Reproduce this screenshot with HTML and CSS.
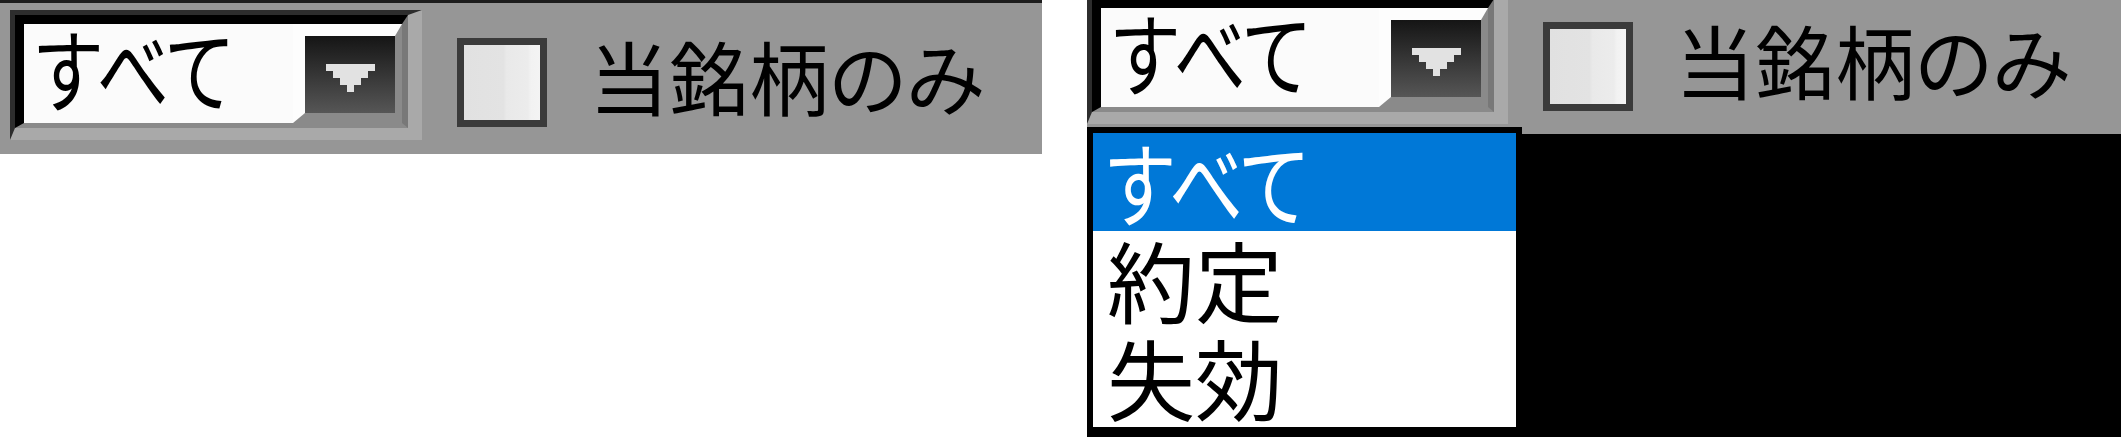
FILE: index.html
```html
<!DOCTYPE html>
<html lang="ja">
<head>
<meta charset="utf-8">
<title>Filter</title>
<link rel="stylesheet" href="styles.css">
</head>
<body>
<div class="screen">
  <section class="pane pane--left">
    <div class="toolbar toolbar--left">
      <div class="row">
        <div class="combo">
          <div class="combo__inner">
            <div class="combo__field"><span class="combo__text">すべて</span></div>
            <div class="combo__btn">
              <div class="combo__face">
                <svg class="combo__arrow" viewBox="0 0 7 4" shape-rendering="crispEdges"><polygon points="0,0 7,0 7,1 6,1 6,2 5,2 5,3 4,3 4,4 3,4 3,3 2,3 2,2 1,2 1,1 0,1"/></svg>
              </div>
            </div>
          </div>
        </div>
        <div class="check">
          <span class="check__box"></span>
          <span class="check__label">当銘柄のみ</span>
        </div>
      </div>
    </div>
  </section>
  <section class="pane pane--right">
    <div class="toolbar toolbar--right">
      <div class="row">
        <div class="combo combo--open">
          <div class="combo__inner">
            <div class="combo__field"><span class="combo__text">すべて</span></div>
            <div class="combo__btn">
              <div class="combo__face">
                <svg class="combo__arrow" viewBox="0 0 7 4" shape-rendering="crispEdges"><polygon points="0,0 7,0 7,1 6,1 6,2 5,2 5,3 4,3 4,4 3,4 3,3 2,3 2,2 1,2 1,1 0,1"/></svg>
              </div>
            </div>
          </div>
          <ul class="dropdown">
            <li class="dropdown__item dropdown__item--selected"><span class="dropdown__text dropdown__text--kana">すべて</span></li>
            <li class="dropdown__item"><span class="dropdown__text">約定</span></li>
            <li class="dropdown__item"><span class="dropdown__text">失効</span></li>
          </ul>
        </div>
        <div class="check">
          <span class="check__box"></span>
          <span class="check__label">当銘柄のみ</span>
        </div>
      </div>
    </div>
  </section>
</div>
</body>
</html>
```

FILE: styles.css
```css
* {
  box-sizing: border-box;
}

html,
body {
  margin: 0;
  padding: 0;
}

body {
  background: #ffffff;
  overflow: hidden;
  font-family: "Noto Sans CJK JP", "Noto Sans CJK SC", sans-serif;
  color: #000000;
}

.screen {
  display: flex;
  gap: 45px;
  height: 437px;
}

.pane--left {
  width: 1042px;
  flex: none;
}

.pane--right {
  flex: 1;
  height: 437px;
  background: #000000;
}

.toolbar {
  background: #969696;
}

.toolbar--left {
  height: 154px;
  border-top: 3px solid #1c1c1c;
}

.toolbar--right {
  height: 140px;
}

.row {
  display: flex;
  align-items: flex-start;
}

.toolbar--left .row {
  margin: 7px 0 0 10px;
}

.toolbar--right .row {
  margin-top: -6px;
}

/* ---- combo box ---- */
.combo {
  position: relative;
  flex: none;
  width: 412px;
  height: 130px;
  border-style: solid;
  border-width: 5px 14px 12px 5px;
  border-color: #2d2d2d #a9a9a9 #a9a9a9 #2d2d2d;
}

.combo--open {
  width: 421px;
}

.combo__inner {
  height: 100%;
  display: flex;
  border-style: solid;
  border-width: 9px 6px 5px 9px;
  border-color: #000000 #787878 #8a8a8a #000000;
}

.combo__field {
  flex: 1;
  min-width: 0;
  background: #fbfbfb;
  display: flex;
  align-items: center;
  padding: 0 0 15px 12px;
}

.combo__text {
  display: inline-block;
  font-size: 90px;
  line-height: 1;
  white-space: nowrap;
  font-feature-settings: "palt";
  transform: scaleX(0.8);
  transform-origin: left center;
}

.combo__btn {
  flex: none;
  width: 109px;
  border-style: solid;
  border-width: 12px 7px 10px 12px;
  border-color: #fdfdfd #8a8a8a #8a8a8a #fdfdfd;
}

.combo__face {
  height: 100%;
  background: linear-gradient(#151515, #565656);
  display: flex;
  justify-content: center;
  padding-top: 28px;
}

.combo__arrow {
  display: block;
  flex: none;
  width: 49px;
  height: 28px;
  fill: #e2e2e2;
}

/* ---- checkbox ---- */
.check {
  display: flex;
  align-items: flex-start;
  margin-left: 35px;
}

.check__box {
  flex: none;
  width: 90px;
  height: 89px;
  margin-top: 28px;
  border: 7px solid #3b3b3b;
  background: linear-gradient(to right, #e1e1e1 0%, #e3e3e3 52%, #e9e9e9 56%, #ececec 84%, #f2f2f2 88%, #f4f4f4 100%);
}

.check__label {
  margin-left: 42px;
  margin-top: 8px;
  font-size: 80px;
  line-height: 1.4;
  white-space: nowrap;
  font-feature-settings: "palt";
}

/* ---- dropdown list ---- */
.dropdown {
  position: absolute;
  left: -5px;
  top: 128px;
  width: 435px;
  margin: 0;
  padding: 0;
  list-style: none;
  background: #ffffff;
  border: 6px solid #000000;
}

.dropdown__item {
  height: 98px;
  padding: 0 0 4px 14px;
  display: flex;
  align-items: center;
}

.dropdown__text {
  display: inline-block;
  font-size: 88px;
  line-height: 1;
  white-space: nowrap;
  font-feature-settings: "palt";
  transform-origin: left center;
}

.dropdown__text--kana {
  font-size: 92px;
  transform: scaleX(0.8);
}

.dropdown__item--selected {
  background: #0078d7;
  color: #ffffff;
}
```
